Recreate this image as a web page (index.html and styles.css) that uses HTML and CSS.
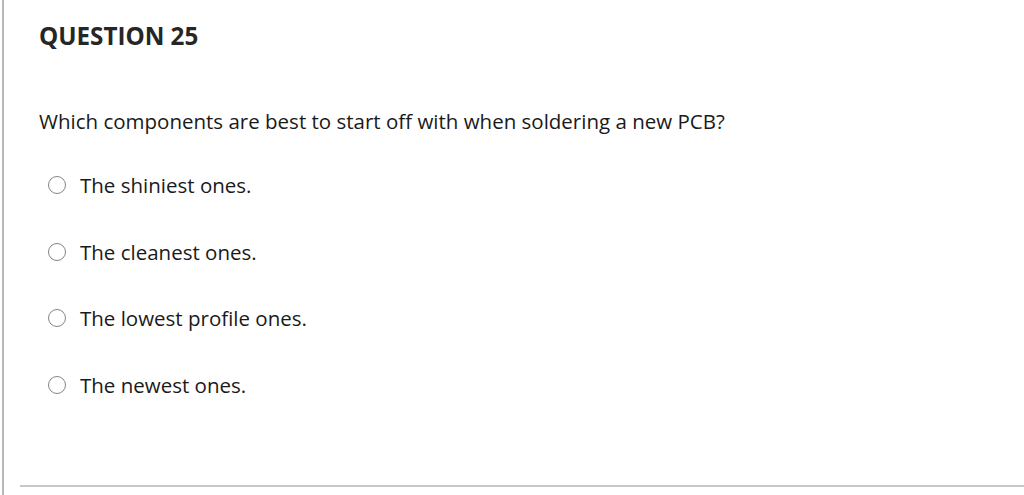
FILE: index.html
```html
<!DOCTYPE html>
<html>
<head>
<meta charset="utf-8">
<link rel="stylesheet" href="styles.css">
</head>
<body>
<div class="page">
  <div class="question">
    <h2 class="qtitle">QUESTION 25</h2>
    <p class="qtext">Which components are best to start off with when soldering a new PCB?</p>
    <ul class="options">
      <li class="option"><span class="radio"></span><span class="label">The shiniest ones.</span></li>
      <li class="option"><span class="radio"></span><span class="label">The cleanest ones.</span></li>
      <li class="option"><span class="radio"></span><span class="label">The lowest profile ones.</span></li>
      <li class="option"><span class="radio"></span><span class="label">The newest ones.</span></li>
    </ul>
  </div>
  <div class="rule"></div>
</div>
</body>
</html>
```
FILE: styles.css
```css
html, body {
  margin: 0;
  padding: 0;
  background: #fff;
}
body {
  font-family: "Open Sans", "Liberation Sans", sans-serif;
  color: #1a1a1a;
  height: 495px;
  overflow: hidden;
}
.page {
  height: 495px;
  border-left: 2px solid #b8b8b8;
  margin-left: 2px;
  display: flex;
  flex-direction: column;
}
.question {
  padding-left: 35px;
  flex: 1;
}
.qtitle {
  margin: 0;
  padding-top: 21px;
  font-size: 24.2px;
  font-weight: 700;
  color: #262626;
  line-height: 30px;
}
.qtext {
  margin: 0;
  margin-top: 56px;
  font-size: 20.5px;
  line-height: 28px;
  color: #1a1a1a;
}
.options {
  list-style: none;
  margin: 36px 0 0 0;
  padding: 0 0 0 9px;
}
.option {
  display: flex;
  align-items: center;
  height: 28px;
  margin-bottom: 38.7px;
}
.radio {
  width: 18px;
  height: 18px;
  border: 1.4px solid #858585;
  border-radius: 50%;
  box-sizing: border-box;
  margin-right: 14px;
  flex: none;
}
.label {
  font-size: 20.5px;
  line-height: 28px;
}
.rule {
  height: 2px;
  background: #c8c8c8;
  margin: 0 0 8px 16px;
}
```
